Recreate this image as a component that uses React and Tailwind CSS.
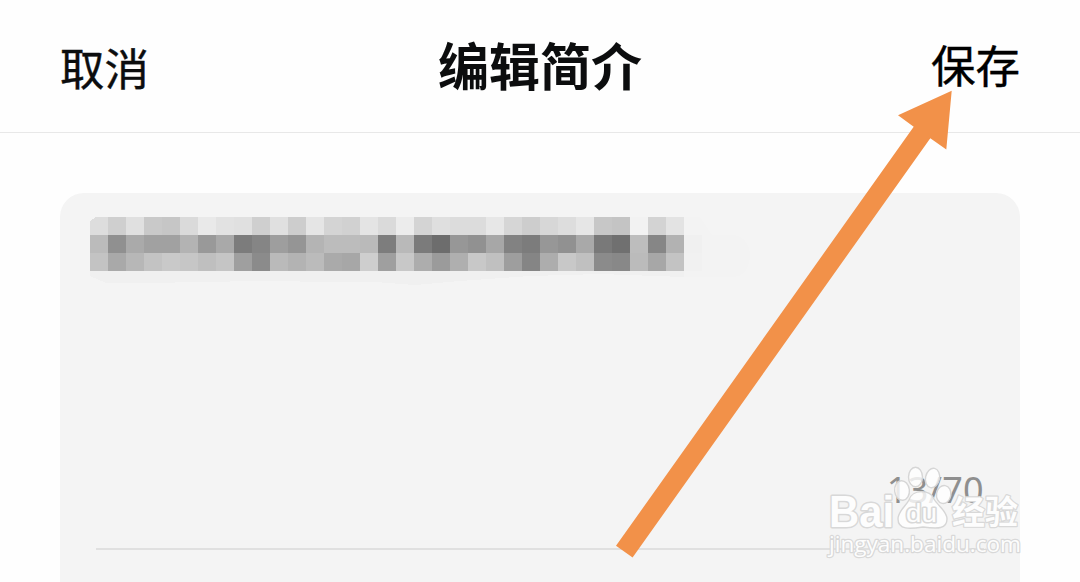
const CELL = 18;

// Grey level of every mosaic block, row by row
const mosaicRows = [
  'dd cf e0 c9 c6 da e9 e2 e0 cf e0 cd e5 d4 d1 e4 da ec d4 df dc dc e7 d6 cd d7 dd e6 c7 c4 f2 d3 e3',
  'bb 90 aa a1 a1 b3 99 a9 7c 85 9e 95 b4 bc bc ba 7d b9 7b 6d 97 91 a7 82 7c 97 91 a9 79 70 bd 86 b2 f0',
  'c3 a9 b7 c3 c9 c6 bf c5 9f 8b ba b3 bb aa a7 ce 9f c8 ad 9b af c8 c0 9e 85 ad c8 c0 8b 88 bb a7 c3 f1',
].map((row) => row.split(' '));

function Header() {
  return (
    <header className="grid h-[133px] shrink-0 grid-cols-3 items-center border-b border-[#e8e8e8] px-[60px] leading-none text-[#0c0d0e]">
      <button className="justify-self-start pt-[3px] text-[44.5px] [-webkit-text-stroke:0.4px_#0c0d0e]">取消</button>
      <h1 className="justify-self-center whitespace-nowrap pb-1 text-[51px] font-bold">编辑简介</h1>
      <button className="justify-self-end pb-[3px] text-[44.5px] text-black [-webkit-text-stroke:0.4px_#000]">保存</button>
    </header>
  );
}

function Mosaic() {
  return (
    <svg className="block h-[72px] w-[670px]" viewBox="0 0 670 72" shapeRendering="crispEdges">
      <path d="M594 0H610L622 18H645Q660 22 660 40Q658 60 642 60H594Z" fill="#f3f3f3" />
      <path d="M0 54H594V60L510 57L440 59L370 64L325 68L285 65L240 65L180 64L100 65L70 66H16L0 59Z" fill="#f0f0f0" />
      {mosaicRows.map((row, y) =>
        row.map((level, x) => (
          <rect key={`${x}-${y}`} x={x * CELL} y={y * CELL} width={CELL} height={CELL} fill={`#${level}${level}${level}`} />
        ))
      )}
      <path d="M0 0H6L0 4Z" fill="#f4f4f4" />
    </svg>
  );
}

function Arrow() {
  return (
    <svg className="pointer-events-none absolute inset-0 h-[582px] w-[1080px]" viewBox="0 0 1080 582">
      <path d="M951.7 90.7L898 115.3L913.7 126.7L616 545.8L632.6 557.5L930.3 138.2L946.3 149.6Z" fill="#f29149" />
    </svg>
  );
}

function Watermark() {
  return (
    <svg className="pointer-events-none absolute right-[54px] bottom-[15px] h-[104px] w-[200px] overflow-visible" viewBox="826 463 200 104">
      {/* Paw logo */}
      <g fill="#fff" fillOpacity=".8" stroke="#d6d6d6" strokeWidth="1.4">
        <ellipse cx="915.5" cy="477" rx="7" ry="9.8" />
        <ellipse cx="932.5" cy="478" rx="7" ry="9.8" transform="rotate(12 932.5 478)" />
        <ellipse cx="902" cy="490.5" rx="7.4" ry="9.8" transform="rotate(-6 902 490.5)" />
        <ellipse cx="943.7" cy="494.5" rx="7.2" ry="9" transform="rotate(10 943.7 494.5)" />
        <path d="M909 500C912 489 931 489 934 499C938 506 947 511 947 519C947 529 938 529 923 527C910 529 898 530 898 519C898 511 906 506 909 500Z" />
      </g>
      <g fill="#fdfdfd" stroke="#d8d8d8" strokeWidth="2.4" strokeLinejoin="round" paintOrder="stroke">
        <text x="829" y="526.5" fontSize="44" textLength="65" lengthAdjust="spacingAndGlyphs" strokeWidth="3" className="font-['Liberation_Sans'] font-bold">Bai</text>
        <text x="906" y="522" fontSize="25" textLength="31" lengthAdjust="spacingAndGlyphs" strokeWidth="3" className="font-['Liberation_Sans']">du</text>
        <text x="952" y="524" fontSize="33" textLength="66" lengthAdjust="spacingAndGlyphs" className="font-['Noto_Sans_CJK_SC'] font-bold">经验</text>
        <text x="829" y="552" fontSize="22" textLength="192" lengthAdjust="spacingAndGlyphs" className="font-['Open_Sans'] font-medium">jingyan.baidu.com</text>
      </g>
    </svg>
  );
}

export default function App() {
  return (
    <div className="relative flex h-[582px] w-[1080px] flex-col overflow-hidden bg-[#fefefe] font-['Noto_Sans_CJK_SC',sans-serif]">
      <Header />
      <main className="flex-1 px-[60px] pt-[60px]">
        <section className="flex h-[389px] flex-col rounded-t-[24px] bg-[#f4f4f4] pt-6">
          <div className="h-[252px] pl-[30px]">
            <Mosaic />
          </div>
          <div className="mr-9 ml-9 flex h-[81px] items-start justify-end border-b-2 border-[#e0e0e0] font-['Noto_Sans'] text-[36px] leading-[40px] text-[#8f8f8f]">
            <span className="pt-px tracking-[0.3px]">13/70</span>
          </div>
        </section>
      </main>
      <Watermark />
      <Arrow />
    </div>
  );
}
